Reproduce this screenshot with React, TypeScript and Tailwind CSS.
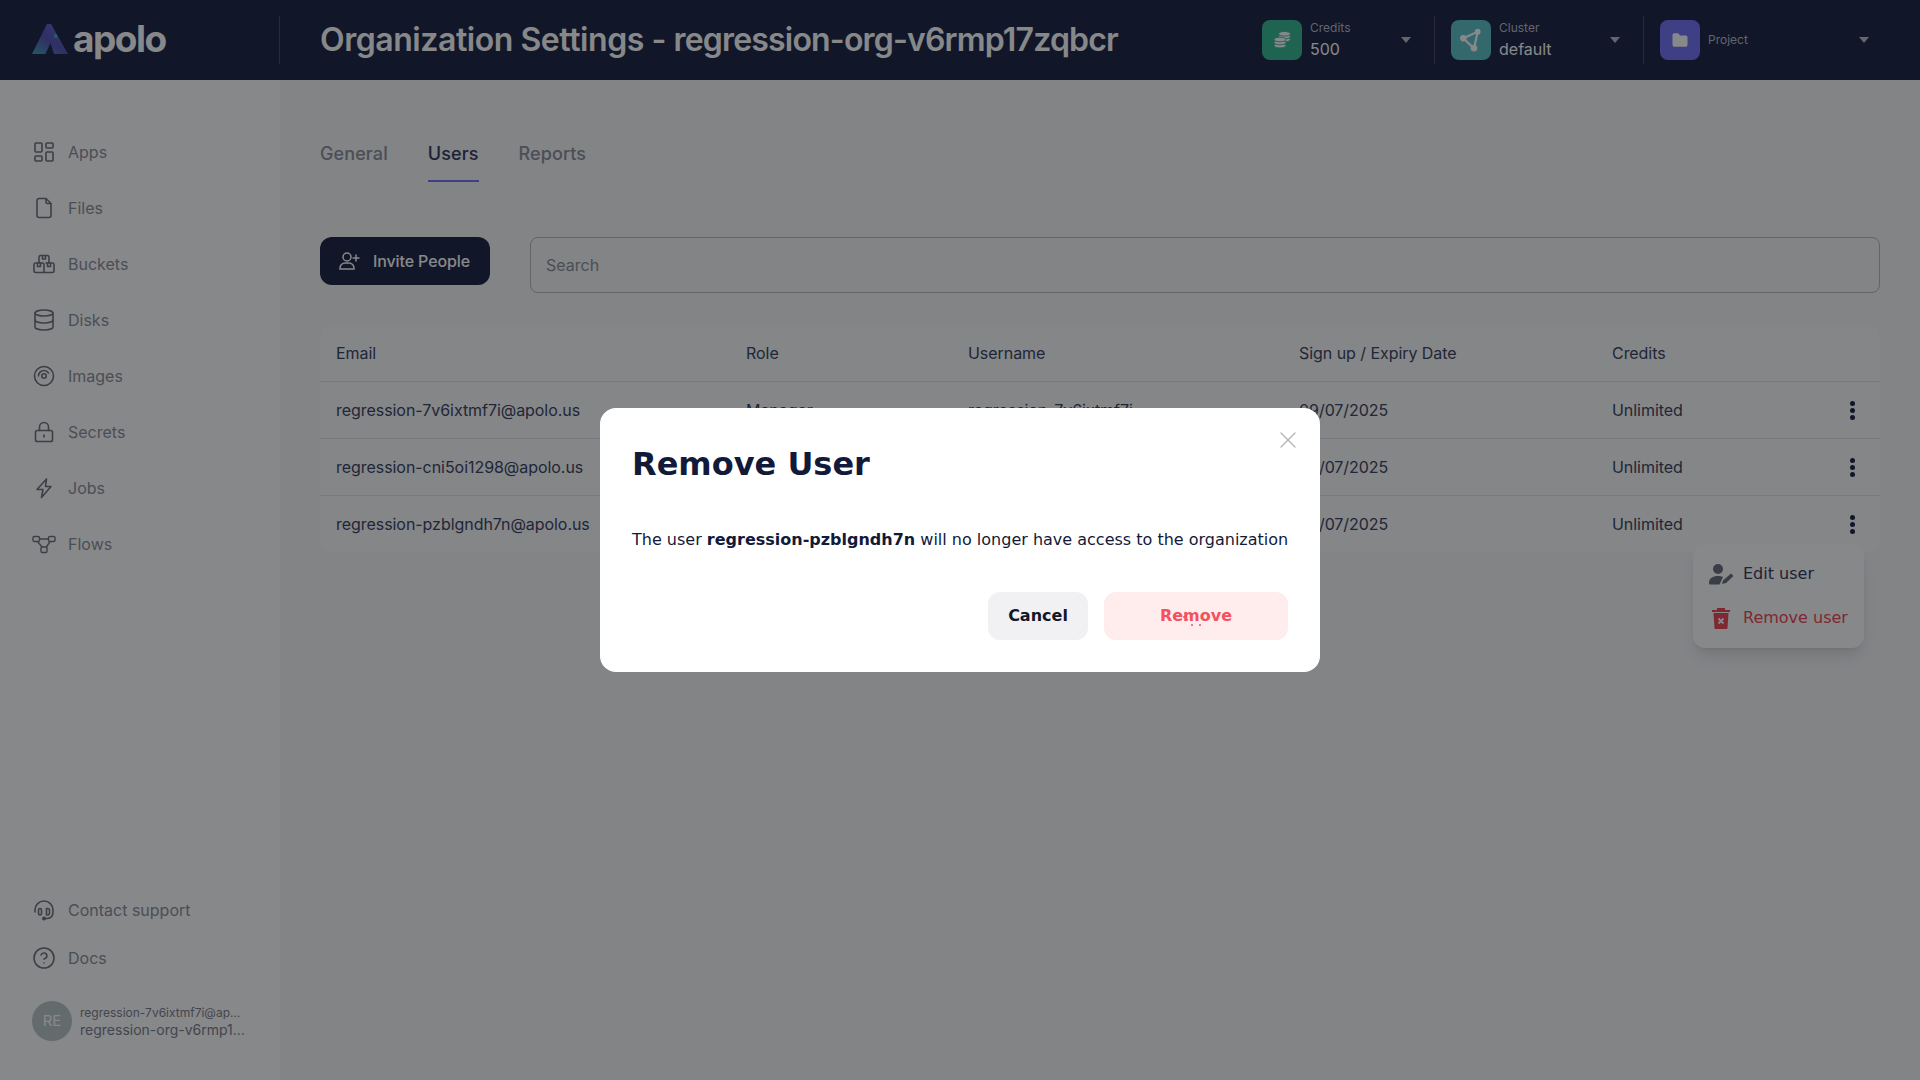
import { CircleHelp, Database, LayoutDashboard, X } from "lucide-react"
import type { ReactNode } from "react"

const inter = "font-['Inter',sans-serif]"
const dejavu = "font-['DejaVu_Sans',sans-serif]"

function Svg({ children, className = "size-6" }: { children: ReactNode; className?: string }) {
  return (
    <svg viewBox="0 0 24 24" fill="none" stroke="currentColor" strokeWidth="1.6" strokeLinecap="round" strokeLinejoin="round" className={className}>
      {children}
    </svg>
  )
}

const navTop: { label: string; icon: ReactNode }[] = [
  { label: "Apps", icon: <LayoutDashboard className="size-6" strokeWidth={1.6} /> },
  {
    label: "Files",
    icon: (
      <Svg>
        <path d="M14 2.5H7a2 2 0 0 0-2 2v15a2 2 0 0 0 2 2h10a2 2 0 0 0 2-2V7.500z" />
        <path d="M14 2.500V6a1.500 1.500 0 0 0 1.500 1.500H19" />
      </Svg>
    ),
  },
  {
    label: "Buckets",
    icon: (
      <Svg>
        <path d="M7 11V5a1.500 1.500 0 0 1 1.500-1.500h7A1.500 1.500 0 0 1 17 5v6" />
        <path d="M10.500 3.500V7h3V3.500" />
        <path d="M12 20.500H3.500A1.500 1.500 0 0 1 2 19v-6.500A1.500 1.500 0 0 1 3.500 11h7a1.500 1.500 0 0 1 1.500 1.500V20.500z" />
        <path d="M12 20.500h8.500A1.500 1.500 0 0 0 22 19v-6.500a1.500 1.500 0 0 0-1.500-1.500H14" />
        <path d="M5.500 11v3.500h3V11M15.500 11v3.500h3V11" />
      </Svg>
    ),
  },
  { label: "Disks", icon: <Database className="size-6" strokeWidth={1.6} /> },
  {
    label: "Images",
    icon: (
      <Svg>
        <circle cx="12" cy="12" r="9.500" />
        <circle cx="12" cy="12" r="2.200" />
        <path d="M6.500 12A5.500 5.500 0 0 1 12 6.500 5.500 5.500 0 0 1 16.500 9" />
      </Svg>
    ),
  },
  {
    label: "Secrets",
    icon: (
      <Svg>
        <rect x="3.500" y="10.500" width="17" height="11" rx="1.800" />
        <path d="M7.500 10.500V7a4.500 4.500 0 0 1 9 0v3.500" />
        <path d="M12 15v2" />
      </Svg>
    ),
  },
  {
    label: "Jobs",
    icon: (
      <Svg>
        <path d="M14.500 3 5 13.500h6L9.500 21.500 19 10.500h-5.500z" />
      </Svg>
    ),
  },
  {
    label: "Flows",
    icon: (
      <svg viewBox="0 0 24 24" fill="none" stroke="currentColor" strokeWidth="1.4" strokeLinecap="round" strokeLinejoin="round" className="size-6">
        <rect x="1" y="4.500" width="6.500" height="5" rx="1.300" />
        <rect x="16.500" y="4.500" width="6.500" height="5" rx="1.300" />
        <rect x="9" y="15" width="6" height="5.500" rx="1.300" />
        <path d="M7.500 7h9M5.500 9.500l4.500 5.500M18 9.500l-3.500 5.500" />
      </svg>
    ),
  },
]

// rows 2 and 3 have their role and username hidden behind the dialog
const users = [
  { email: "regression-7v6ixtmf7i@apolo.us", role: "Manager", username: "regression-7v6ixtmf7i", date: "09/07/2025" },
  { email: "regression-cni5oi1298@apolo.us", role: "", username: "", date: "09/07/2025" },
  { email: "regression-pzblgndh7n@apolo.us", role: "", username: "", date: "09/07/2025" },
]

function NavItem({ icon, label, h }: { icon: ReactNode; label: string; h: string }) {
  return (
    <div className={`flex items-center gap-3 text-base text-[#8f929c] ${h}`}>
      <span className="text-[#747680]">{icon}</span>
      {label}
    </div>
  )
}

function Selector({ tile, icon, label, value, width, line }: { tile: string; icon: ReactNode; label: string; value?: string; width: string; line?: boolean }) {
  return (
    <div className={`flex items-center gap-2 h-12 pr-4 ${width} ${line ? "border-r border-[#4a4f63] mr-4" : ""}`}>
      <div className={`size-10 rounded-lg flex items-center justify-center text-white shrink-0 ${tile}`}>{icon}</div>
      <div className="flex-1 leading-none">
        <div className="text-xs text-[#b9bcc6]">{label}</div>
        {value && <div className="text-base text-white mt-[1px]">{value}</div>}
      </div>
      <svg viewBox="0 0 10 6" className="w-[10px] h-[6px] mr-[7px] fill-white/70">
        <path d="M0 0h10L5 6z" />
      </svg>
    </div>
  )
}

function Row({ user, last }: { user: (typeof users)[number]; last?: boolean }) {
  return (
    <div className={`grid grid-cols-[410px_222px_331px_313px_1fr_24px] items-center px-4 text-base tracking-[-0.05px] text-[#3f4764] ${last ? "h-14" : "h-[57px] border-b border-[#e3e4e8]"}`}>
      <span>{user.email}</span>
      <span>{user.role}</span>
      <span>{user.username}</span>
      <span>{user.date}</span>
      <span>Unlimited</span>
      <span className="flex flex-col items-center gap-[2px]">
        <i className="size-[5px] rounded-full bg-[#202948]" />
        <i className="size-[5px] rounded-full bg-[#202948]" />
        <i className="size-[5px] rounded-full bg-[#202948]" />
      </span>
    </div>
  )
}

export default function App() {
  return (
    <div className={`relative h-screen w-full overflow-hidden flex flex-col ${inter}`}>
      <header className="h-20 shrink-0 bg-[#202948] flex items-center text-white">
        <div className="w-[280px] h-12 shrink-0 border-r border-[#4a4f63] pl-8 flex items-center gap-[5px]">
          <svg viewBox="0 0 36 30" className="w-[36px] h-[30px] -mt-[2px]">
            <defs>
              <linearGradient id="apolo-a" x1="0" y1="1" x2="0.7" y2="0.2">
                <stop offset="0" stopColor="#45a6b8" />
                <stop offset="0.6" stopColor="#5a58b8" />
                <stop offset="1" stopColor="#6563cc" />
              </linearGradient>
            </defs>
            <path d="M15 0H19L36 30H22L18.500 19 13.500 30H0z" fill="url(#apolo-a)" />
            <path d="M23.700 9.500 26 13.500H21.500z" fill="#2fd39b" />
          </svg>
          <span className="text-[37px] font-bold tracking-[-0.04em] leading-none -mt-1">apolo</span>
        </div>
        <h1 className="flex-1 pl-10 text-[32px] font-semibold leading-none whitespace-nowrap text-white">
          <span className="tracking-[-0.44px]">Organization Settings - </span>
          <span className="tracking-[-0.82px]">regression-org-v6rmp17zqbcr</span>
        </h1>
        <div className="flex items-center pr-7">
          <Selector
            tile="bg-[#3abb91]"
            label="Credits"
            value="500"
            width="w-[173px]"
            line
            icon={
              <svg viewBox="0 0 24 24" className="size-6 fill-white stroke-[#3abb91]" strokeWidth="0.9">
                <ellipse cx="14.500" cy="11.500" rx="6" ry="2.300" />
                <ellipse cx="14.500" cy="8.500" rx="6" ry="2.300" />
                <ellipse cx="14.500" cy="5.800" rx="6" ry="2.300" />
                <ellipse cx="10" cy="17.600" rx="6" ry="2.300" />
                <ellipse cx="10" cy="14.500" rx="6" ry="2.300" />
                <ellipse cx="10" cy="11.500" rx="6" ry="2.300" />
              </svg>
            }
          />
          <Selector
            tile="bg-[#60c4c6]"
            label="Cluster"
            value="default"
            width="w-[193px]"
            line
            icon={
              <svg viewBox="0 0 24 24" className="size-6" fill="none" stroke="white" strokeWidth="2.200">
                <path d="M18.700 3.700 4.300 10.300 15 20.300z" />
                <circle cx="18.700" cy="3.700" r="1.800" fill="white" />
                <circle cx="4.300" cy="10.300" r="2.200" fill="white" />
                <circle cx="15" cy="20.300" r="2.200" fill="white" />
              </svg>
            }
          />
          <Selector
            tile="bg-[#7775f5]"
            label="Project"
            width="w-[232px]"
            icon={
              <svg viewBox="0 0 24 24" className="size-5 fill-white">
                <path d="M3 6a2 2 0 0 1 2-2h5l2 2.500h7a2 2 0 0 1 2 2V18a2 2 0 0 1-2 2H5a2 2 0 0 1-2-2z" />
              </svg>
            }
          />
        </div>
      </header>

      <div className="flex-1 flex min-h-0">
        <aside className="w-[280px] shrink-0 bg-white flex flex-col justify-between pl-8 pt-[44px] pb-[39px]">
          <nav className="flex flex-col">
            {navTop.map((item) => (
              <NavItem key={item.label} {...item} h="h-14" />
            ))}
          </nav>
          <div className="flex flex-col">
            <NavItem
              label="Contact support"
              h="h-12"
              icon={
                <Svg>
                  <path d="M3 14v-2a9 9 0 0 1 18 0v2c0 4-2 6.500-6 6.500h-2" />
                  <rect x="6.500" y="10.500" width="3" height="6.500" rx="1.500" />
                  <path d="M14.500 10.500h1a2 2 0 0 1 2 2V15a2 2 0 0 1-2 2h-1z" />
                  <circle cx="12" cy="20.500" r="1.200" fill="currentColor" />
                </Svg>
              }
            />
            <NavItem label="Docs" h="h-12" icon={<CircleHelp className="size-6" strokeWidth={1.6} />} />
            <div className="flex items-center gap-2 mt-[19px] h-10">
              <div className="size-10 rounded-full bg-[#bcc8c9] text-white flex items-center justify-center text-[15px] shrink-0">RE</div>
              <div className="w-[167px] text-[#7f828e]">
                <div className="text-xs leading-[17px] truncate">regression-7v6ixtmf7i@apolo.us</div>
                <div className="text-sm leading-[17px] truncate">regression-org-v6rmp17zqbcr</div>
              </div>
            </div>
          </div>
        </aside>

        <main className="flex-1 bg-[#f6f7f8] px-10 pt-[60px] relative">
          <div className="flex gap-10 text-lg font-medium tracking-[0.1px] text-[#8f929c] h-[42px]">
            <span>General</span>
            <span className="h-[42px] text-[#394061] border-b-2 border-[#7775f5]">Users</span>
            <span>Reports</span>
          </div>
          <div className="flex items-start gap-10 mt-[55px]">
            <button className="h-12 w-[170px] rounded-xl bg-[#202948] text-white flex items-center justify-center gap-3 pr-[3px] text-base font-medium tracking-[-0.1px] shrink-0">
              <svg viewBox="0 0 24 24" fill="none" stroke="currentColor" strokeWidth="1.500" strokeLinecap="round" className="size-6">
                <circle cx="10" cy="8" r="4" />
                <path d="M3 20v-1a5 5 0 0 1 5-5h4a5 5 0 0 1 5 5v1zM19 6v6M16 9h6" />
              </svg>
              Invite People
            </button>
            <div className="flex-1 h-14 rounded-lg border border-[#b9bbc2] flex items-center px-[15px] text-base text-[#8f929c]">Search</div>
          </div>
          <div className="mt-8 rounded-xl bg-[#fafbfb] w-[1560px]">
            <div className="grid grid-cols-[410px_222px_331px_313px_1fr] items-center h-[57px] px-4 text-base tracking-[-0.05px] text-[#3f4764] border-b border-[#e3e4e8]">
              <span>Email</span>
              <span>Role</span>
              <span>Username</span>
              <span>Sign up / Expiry Date</span>
              <span>Credits</span>
            </div>
            {users.map((user, i) => (
              <Row key={user.email} user={user} last={i === users.length - 1} />
            ))}
          </div>
          {/* row menu */}
          <div className={`absolute left-[1413px] top-[464px] w-[171px] h-[104px] rounded-xl bg-white shadow-lg px-4 py-2 text-base ${dejavu}`}>
            <div className="flex items-center h-11 gap-2 text-[#394061]">
              <svg viewBox="0 0 26 22" className="w-[26px] h-[22px] shrink-0 fill-[#6f7280]">
                <circle cx="9" cy="6" r="5" />
                <path d="M0 20c0-5 4-7 9-7 2 0 3.500.3 5 1l-3 6.500-.5 1H1a1 1 0 0 1-1-1.500zM13 21l1-3.500 8-7 2.500 2.500-7.500 7z" />
              </svg>
              Edit user
            </div>
            <div className="flex items-center h-11 gap-2 text-[#ee4b5a]">
              <svg viewBox="0 0 24 22" className="w-[24px] h-[22px] shrink-0 fill-[#ee4b5a]">
                <path d="M3 3h18v2H3zM8 1h8v2H8zM4.500 6h15l-1 15a1 1 0 0 1-1 1h-11a1 1 0 0 1-1-1z" />
                <path d="M9.500 11.500l5 5M14.500 11.500l-5 5" stroke="white" strokeWidth="1.800" />
              </svg>
              <span className="ml-[2px]">Remove user</span>
            </div>
          </div>
        </main>
      </div>

      {/* dialog */}
      <div className="absolute inset-0 bg-[rgba(0,2,6,0.47)] flex items-center justify-center">
        <div className={`relative w-[720px] h-[264px] bg-white rounded-2xl p-8 text-[#121a3a] ${dejavu}`}>
          <X className="absolute right-[18px] top-[18px] size-7 text-[#bdbdbd]" strokeWidth={1.4} />
          <h2 className="text-[32px] font-bold leading-[38px] mt-[5px]">Remove User</h2>
          <p className="text-base leading-6 mt-[45px] whitespace-nowrap">
            The user <b>regression-pzblgndh7n</b> will no longer have access to the organization
          </p>
          <div className="flex justify-end gap-4 mt-[40px]">
            <button className="h-12 w-[100px] rounded-xl bg-[#f1f1f3] text-[#111827] text-base font-bold">Cancel</button>
            <button className="relative h-12 w-[184px] rounded-xl bg-[#ffecec] text-[#f4505f] text-base font-bold">
              Remove
              <svg viewBox="0 0 40 24" className="absolute left-[72px] top-[18px] w-10 h-6 fill-[#f4505f]">
                <circle cx="8" cy="7" r="1" />
                <circle cx="11" cy="10" r="1" />
                <circle cx="29" cy="10" r="1" />
                <circle cx="16" cy="15" r="1" />
                <circle cx="24" cy="15" r="1" />
              </svg>
            </button>
          </div>
        </div>
      </div>
    </div>
  )
}
